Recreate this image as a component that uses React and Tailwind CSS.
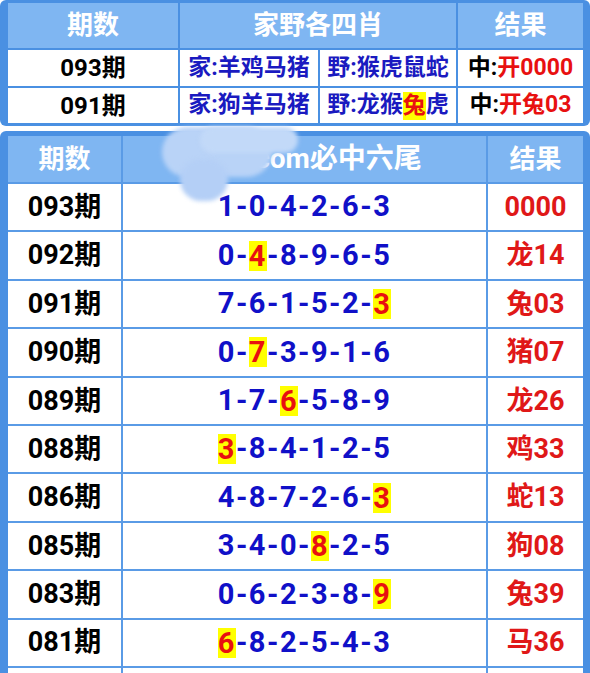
import React from "react";

const FONT = { fontFamily: 'Roboto, "Noto Sans CJK SC", "Noto Sans", sans-serif' };

const rows = [
  ["093期", [1, 0, 4, 2, 6, 3], -1, "0000"],
  ["092期", [0, 4, 8, 9, 6, 5], 1, "龙14"],
  ["091期", [7, 6, 1, 5, 2, 3], 5, "兔03"],
  ["090期", [0, 7, 3, 9, 1, 6], 1, "猪07"],
  ["089期", [1, 7, 6, 5, 8, 9], 2, "龙26"],
  ["088期", [3, 8, 4, 1, 2, 5], 0, "鸡33"],
  ["086期", [4, 8, 7, 2, 6, 3], 5, "蛇13"],
  ["085期", [3, 4, 0, 8, 2, 5], 3, "狗08"],
  ["083期", [0, 6, 2, 3, 8, 9], 5, "兔39"],
  ["081期", [6, 8, 2, 5, 4, 3], 0, "马36"],
];

function Nums({ d, h }) {
  const out = [];
  d.forEach((n, i) => {
    if (i > 0) out.push(<span key={"s" + i}>-</span>);
    out.push(
      i === h ? (
        <span key={i} className="inline-block h-[30px] leading-[31px] bg-[#ffff00] text-[#e81010]">{n}</span>
      ) : (
        <span key={i}>{n}</span>
      )
    );
  });
  return <>{out}</>;
}

export default function App() {
  return (
    <div className="w-[590px] h-[673px] overflow-hidden bg-white font-bold" style={FONT}>
      {/* top table */}
      <div className="bg-[#4a90e2] rounded-[6px] pt-[3px] pb-[3px] pl-[8px] pr-[7px]">
        <div className="grid grid-cols-[170px_138px_136px_125px] gap-[2px] bg-[#4a90e2]">
          <div className="h-[45px] bg-[#7fb6f2] flex items-center justify-center text-white text-[26px]">期数</div>
          <div className="col-span-2 h-[45px] bg-[#7fb6f2] flex items-center justify-center text-white text-[26px]">家野各四肖</div>
          <div className="h-[45px] bg-[#7fb6f2] flex items-center justify-center text-white text-[26px]">结果</div>

          <div className="h-[36px] bg-white flex items-center justify-center text-black text-[24px]">093期</div>
          <div className="h-[36px] bg-white flex items-center justify-center text-[#1a1ac0] text-[23px]">家:羊鸡马猪</div>
          <div className="h-[36px] bg-white flex items-center justify-center text-[#1a1ac0] text-[23px]">野:猴虎鼠蛇</div>
          <div className="h-[36px] bg-white flex items-center justify-center text-[23px]">
            <span className="text-black">中:</span>
            <span className="text-[#e81010]">开0000</span>
          </div>

          <div className="h-[35px] bg-white flex items-center justify-center text-black text-[24px]">091期</div>
          <div className="h-[35px] bg-white flex items-center justify-center text-[#1a1ac0] text-[23px]">家:狗羊马猪</div>
          <div className="h-[35px] bg-white flex items-center justify-center text-[#1a1ac0] text-[23px]">
            野:龙猴<span className="inline-block h-[28px] leading-[28px] bg-[#ffff00] text-[#e81010]">兔</span>虎
          </div>
          <div className="h-[35px] bg-white flex items-center justify-center text-[23px]">
            <span className="text-black">中:</span>
            <span className="text-[#e81010]">开兔03</span>
          </div>
        </div>
      </div>

      {/* second table */}
      <div className="relative mt-[5px] bg-[#4a90e2] rounded-[6px] pt-[5px] pl-[8px] pr-[7px]">
        <div className="grid grid-cols-[113px_363px_95px] gap-[2px] bg-[#5a9be6]">
          <div className="h-[46px] bg-[#7fb6f2] flex items-center justify-center text-white text-[26px]">期数</div>
          <div className="h-[46px] bg-[#7fb6f2] flex items-center justify-center text-white text-[28px]">
            <span>www.com必中六尾</span>
          </div>
          <div className="h-[46px] bg-[#7fb6f2] flex items-center justify-center text-white text-[26px]">结果</div>

          {rows.map(([p, d, h, r]) => (
            <React.Fragment key={p}>
              <div className="h-[46.4px] bg-white flex items-center justify-center text-black text-[27px]">{p}</div>
              <div className="h-[46.4px] bg-white flex items-center justify-center text-[#1010c8] text-[29px] tracking-[1.5px]">
                <Nums d={d} h={h} />
              </div>
              <div className="h-[46.4px] bg-white flex items-center justify-center text-[#e01818] text-[27px]">{r}</div>
            </React.Fragment>
          ))}
          <div className="h-[46px] bg-white"></div>
          <div className="h-[46px] bg-white"></div>
          <div className="h-[46px] bg-white"></div>
        </div>

        {/* blurred smudge over title */}
        <div className="absolute left-[162px] top-[-4px] w-[110px] h-[50px] rounded-full bg-[#b9d3f7] blur-[2px]"></div>
        <div className="absolute left-[200px] top-[-4px] w-[98px] h-[26px] rounded-full bg-[#c2d9f8] blur-[2px]"></div>
        <div className="absolute left-[180px] top-[28px] w-[48px] h-[42px] rounded-full bg-[#b4cff6] blur-[2px]"></div>
      </div>
    </div>
  );
}
